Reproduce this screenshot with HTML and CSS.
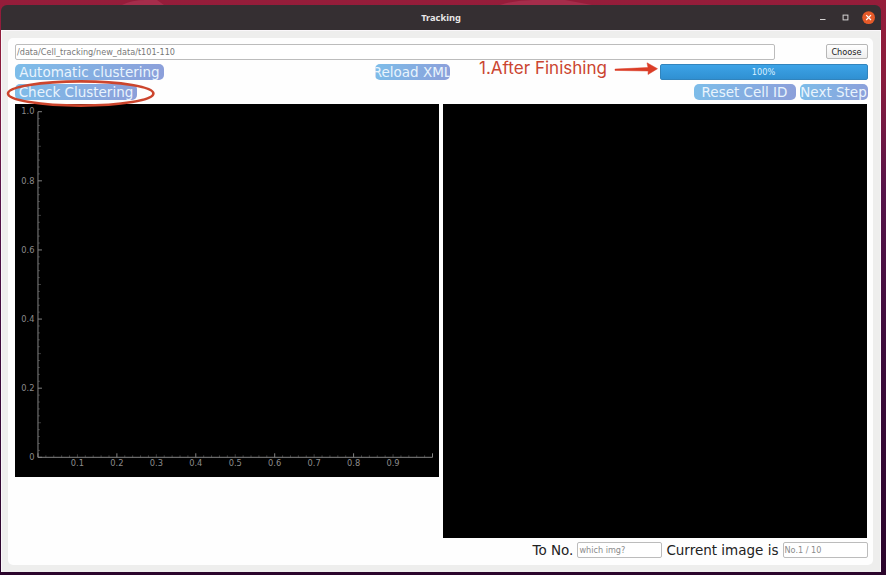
FILE: index.html
```
<!DOCTYPE html>
<html lang="en">
<head>
<meta charset="utf-8">
<title>Tracking</title>
<link rel="stylesheet" href="styles.css">
</head>
<body>
<svg class="wallpaper" width="886" height="575" viewBox="0 0 886 575"><path d="M122 5Q132 0 145 0H157L164 5ZM500 5Q515 0 533 0H565L592 5Z"/></svg>
<main class="window">
  <header class="titlebar">
    <h1>Tracking</h1>
    <svg class="controls" width="62" height="16" viewBox="0 0 62 16">
      <path d="M4 9.5H9.5" stroke="#d5d3d2" stroke-width="1.2"/>
      <rect x="27.1" y="5.1" width="4.8" height="4.8" fill="none" stroke="#d5d3d2"/>
      <circle cx="52.6" cy="7.6" r="6.4" fill="#e55a29"/>
      <path d="M50.2 5.2L55 10M55 5.2L50.2 10" stroke="#fff" stroke-width="1.2"/>
    </svg>
  </header>
  <div class="frame">
    <div class="panel">
      <div class="row path-row">
        <div class="field path">/data/Cell_tracking/new_data/t101-110</div>
        <div class="choose">Choose</div>
      </div>
      <div class="row action-row">
        <div class="pill automatic">Automatic clustering</div>
        <div class="pill reload"><span>Reload XML</span></div>
        <div class="progress">100%</div>
      </div>
      <div class="row check-row">
        <div class="pill check">Check Clustering</div>
        <div class="pill reset">Reset Cell ID</div>
        <div class="pill next">Next Step</div>
      </div>
      <div class="views">
        <svg class="plot" id="plot" width="424" height="373" viewBox="15 104 424 373"></svg>
        <div class="image-view"></div>
      </div>
      <div class="footer">
        <span class="to-label">To No.</span>
        <div class="field small">which img?</div>
        <span class="current-label">Current image is</span>
        <div class="field small">No.1 / 10</div>
      </div>
    </div>
  </div>
</main>
<svg class="annotations" width="886" height="575" viewBox="0 0 886 575">
  <ellipse cx="80.7" cy="93.5" rx="72.7" ry="12.1" fill="none" stroke="#cc452d" stroke-width="2.6"/>
  <text x="479" y="74" textLength="128" lengthAdjust="spacingAndGlyphs">1.After Finishing</text>
  <path d="M615 69.1L648 67.5L647 62.8L657.5 68.7L648 74.5L648.2 71L615 70.4Z" fill="#db3d27" stroke="#db3d27" stroke-width=".5"/>
</svg>
<script src="plot.js"></script>
</body>
</html>
```
FILE: styles.css
```
* { box-sizing: border-box; }
body {
  margin: 0;
  width: 886px;
  height: 575px;
  padding: 5px 5px 3px 1px;
  overflow: hidden;
  background: linear-gradient(#951d3a 0, #881c3d 80px, #57144a 190px, #3d0c3c 350px, #2b052c 575px);
  font-family: "DejaVu Sans", sans-serif;
}
.wallpaper { position: absolute; left: 0; top: 0; fill: #a52d4b; }
.window {
  position: relative;
  width: 880px;
  height: 567px;
  display: flex;
  flex-direction: column;
  border-radius: 6px 6px 0 0;
  overflow: hidden;
}
.titlebar {
  flex: 0 0 25px;
  display: grid;
  grid-template-columns: 1fr auto 1fr;
  align-items: center;
  background: #352f32;
}
.titlebar h1 {
  grid-column: 2;
  margin: 1px 0 0;
  color: #e9e7e7;
  font: bold 9.3px/12px "Noto Sans", sans-serif;
}
.controls { justify-self: end; margin-right: 3px; }
.frame {
  flex: 1;
  padding: 7px 7px 7px 6px;
  background: #eeeeed;
  border: 1px solid #faf7fa;
}
.panel {
  height: 527px;
  padding: 6px 6px 0 7px;
  border-radius: 5px;
  background: #fefefe;
}
.row { display: flex; width: 852.5px; height: 16px; margin-bottom: 4px; }
.path-row { justify-content: space-between; }
.field {
  height: 16px;
  padding-left: 1px;
  border: 1px solid #bcbcbc;
  border-radius: 2px;
  background: #fff;
  color: #777;
  font-size: 8.15px;
  line-height: 14px;
  white-space: nowrap;
}
.path { width: 760px; }
.choose {
  width: 42px;
  height: 15px;
  border: 1px solid #b7b7b7;
  border-radius: 2px;
  background: linear-gradient(#fff, #eee);
  color: #222;
  font-size: 8.2px;
  line-height: 14px;
  text-align: center;
}
.pill {
  height: 16px;
  border-radius: 5px;
  overflow: hidden;
  background: linear-gradient(100deg, #7dbde9, #8c9fda);
  color: #e9f4fd;
  font-size: 13.5px;
  line-height: 16px;
  white-space: nowrap;
  display: flex;
  justify-content: center;
}
.automatic { width: 149px; }
.reload { width: 75px; margin-left: 210.5px; }
.progress {
  width: 208px;
  margin-left: auto;
  border: 1px solid #3184bd;
  border-radius: 2px;
  background: linear-gradient(#3ca3e7, #3090d2);
  color: #d9efff;
  font-size: 8.2px;
  line-height: 14px;
  text-align: center;
}
.check { width: 122px; }
.reset { width: 102px; margin-left: auto; }
.next { width: 68px; margin-left: 4px; }
.views { display: flex; gap: 4px; align-items: flex-start; }
.plot { display: block; background: #000; }
.plot path { fill: none; stroke: #858585; }
.plot .minor { stroke: #3c3c3c; }
.plot text { fill: #8c8c8c; font-size: 8.3px; }
.image-view { width: 425px; height: 434px; background: #000; }
.footer {
  display: flex;
  justify-content: flex-end;
  width: 852.5px;
  margin-top: 4px;
  color: #222;
  font-size: 13.5px;
  line-height: 16px;
  white-space: nowrap;
}
.small { width: 85px; color: #8b8b8b; }
.to-label, .current-label { margin-right: 4px; }
.current-label { margin-left: 4px; }
.annotations { position: absolute; left: 0; top: 0; pointer-events: none; }
.annotations text { fill: #cb4530; font: 17px "Inter", "Roboto", sans-serif; }
```
FILE: plot.js
```
const plot = document.getElementById("plot");
const left = 38, right = 433, top_ = 111.5, bottom = 457.5;
const xAt = v => left + v * (right - left);
const yAt = v => bottom - v * (bottom - top_);
let minor = "", labels = "";
let major = `M${left} ${top_}V${bottom}H${right}`;
for (let i = 0; i <= 50; i++) {
  const x = xAt(i / 50);
  if (i % 5) minor += `M${x} ${bottom}v-2`;
  else if (i % 10 === 0) major += `M${x} ${bottom}v-4`;
  else minor += `M${x} ${bottom}v-3`;
  const y = yAt(i / 50);
  if (i % 10 === 0) major += `M${left} ${y}h4`;
  else minor += `M${left} ${y}h${i % 5 ? 2 : 3}`;
}
for (let i = 1; i < 10; i++) {
  labels += `<text x="${xAt(i / 10)}" y="466.2" text-anchor="middle">0.${i}</text>`;
}
["0", "0.2", "0.4", "0.6", "0.8", "1.0"].forEach((t, i) => {
  labels += `<text x="34.5" y="${yAt(i / 5) + 2.8}" text-anchor="end">${t}</text>`;
});
plot.innerHTML = `<path class="minor" d="${minor}"/><path d="${major}"/>${labels}`;
```
